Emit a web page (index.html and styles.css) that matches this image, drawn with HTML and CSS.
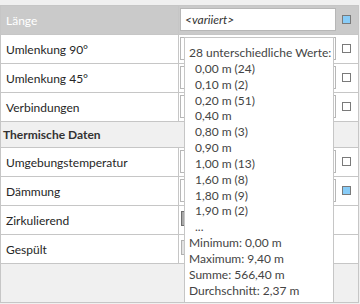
FILE: index.html
```html
<!DOCTYPE html>
<html lang="de">
<head>
    <meta charset="UTF-8">
    <meta name="viewport" content="width=device-width, initial-scale=1.0">
    <title>Eigenschaften</title>
    <link rel="stylesheet" href="styles.css">
</head>
<body>
    <div class="grid">
        <div class="row selected">
            <div class="label">Länge</div>
            <div class="value">
                <div class="textbox"><i>&lt;variiert&gt;</i></div>
                <div class="check"><span class="box checked"></span></div>
            </div>
        </div>
        <div class="row">
            <div class="label">Umlenkung 90°</div>
            <div class="value">
                <div class="textbox"></div>
                <div class="check"><span class="box"></span></div>
            </div>
        </div>
        <div class="row">
            <div class="label">Umlenkung 45°</div>
            <div class="value">
                <div class="textbox"></div>
                <div class="check"><span class="box"></span></div>
            </div>
        </div>
        <div class="row">
            <div class="label">Verbindungen</div>
            <div class="value">
                <div class="textbox"></div>
                <div class="check"><span class="box"></span></div>
            </div>
        </div>
        <div class="category">Thermische Daten</div>
        <div class="row">
            <div class="label">Umgebungstemperatur</div>
            <div class="value">
                <div class="textbox"></div>
                <div class="check"><span class="box"></span></div>
            </div>
        </div>
        <div class="row">
            <div class="label">Dämmung</div>
            <div class="value">
                <div class="textbox"></div>
                <div class="check"><span class="box checked"></span></div>
            </div>
        </div>
        <div class="row">
            <div class="label">Zirkulierend</div>
            <div class="value">
                <div class="toggle dark"></div>
            </div>
        </div>
        <div class="row">
            <div class="label">Gespült</div>
            <div class="value">
                <div class="toggle"></div>
            </div>
        </div>

        <div class="tooltip">
            <div>28 unterschiedliche Werte:</div>
            <div class="item">0,00 m (24)</div>
            <div class="item">0,10 m (2)</div>
            <div class="item">0,20 m (51)</div>
            <div class="item">0,40 m</div>
            <div class="item">0,80 m (3)</div>
            <div class="item">0,90 m</div>
            <div class="item">1,00 m (13)</div>
            <div class="item">1,60 m (8)</div>
            <div class="item">1,80 m (9)</div>
            <div class="item">1,90 m (2)</div>
            <div class="item">...</div>
            <div>Minimum: 0,00 m</div>
            <div>Maximum: 9,40 m</div>
            <div>Summe: 566,40 m</div>
            <div>Durchschnitt: 2,37 m</div>
        </div>
    </div>
</body>
</html>
```

FILE: styles.css
```css
body {
    margin: 0;
    padding-top: 5px;
    background: #f0f0f0;
    font-family: "Segoe UI", Lato, sans-serif;
    font-size: 12px;
    color: #262626;
}

.grid {
    position: relative;
    width: 359px;
    height: 298px;
    box-sizing: border-box;
    border: 1px solid #c6c6c6;
}

.row {
    display: flex;
    height: 29px;
    box-sizing: border-box;
    border-bottom: 1px solid #c6c6c6;
    background: white;
}

.row.selected {
    background: #cacaca;
}

.label {
    width: 178px;
    box-sizing: border-box;
    border-right: 1px solid #c6c6c6;
    padding-left: 5px;
    line-height: 30px;
}

.selected .label {
    color: white;
}

.value {
    flex: 1;
    display: flex;
    align-items: flex-start;
}

.textbox {
    width: 156px;
    height: 23px;
    box-sizing: border-box;
    margin: 2px 0 0 1px;
    border: 1px solid #b7b7b7;
    background: white;
    padding-left: 4px;
    line-height: 21px;
    color: #333;
}

.check {
    padding: 9px 0 0 6px;
}

.box {
    display: block;
    width: 9px;
    height: 9px;
    box-sizing: border-box;
    border: 1px solid #7a7a7a;
    background: white;
}

.box.checked {
    background: #88ccf7;
}

.toggle {
    width: 30px;
    height: 15px;
    box-sizing: border-box;
    margin: 5px 0 0 2px;
    border: 1px solid #b0b0b0;
    background: #e2e2e2;
}

.toggle.dark {
    border-color: #6e6e6e;
    background: #a8a8a8;
}

.category {
    height: 26px;
    box-sizing: border-box;
    border-bottom: 1px solid #c6c6c6;
    padding-left: 2px;
    line-height: 26px;
    font-weight: bold;
    color: #333;
}

.tooltip {
    position: absolute;
    left: 183px;
    top: 31px;
    width: 150px;
    height: 266px;
    box-sizing: border-box;
    border: 1px solid #c6c6c6;
    background: white;
    padding: 7px 0 0 4px;
    line-height: 15.85px;
    white-space: nowrap;
    color: #444;
}

.tooltip .item {
    padding-left: 6px;
}
```
